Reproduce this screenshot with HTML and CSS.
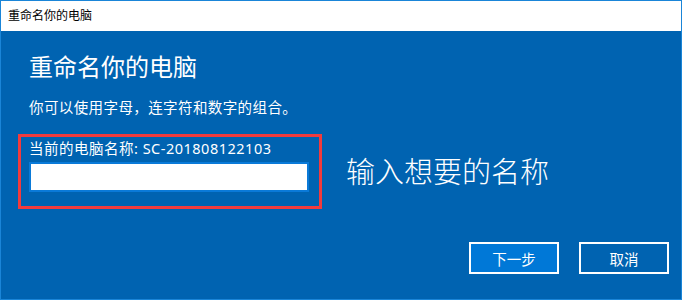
FILE: index.html
```html
<html>
<head>
    <title>重命名你的电脑</title>
    <meta name="viewport" content="width=device-width, initial-scale=1.0">
    <link rel="stylesheet" href="styles.css">
</head>
<body>
<div class="window">
    <div class="titlebar">重命名你的电脑</div>
    <div class="content">
        <h1>重命名你的电脑</h1>
        <p class="subtitle">你可以使用字母，连字符和数字的组合。</p>

        <div class="name-row">
            <div class="highlight">
                <label for="pcname">当前的电脑名称: SC-201808122103</label>
                <input type="text" id="pcname">
            </div>
            <div class="hint">输入想要的名称</div>
        </div>

        <div class="actions">
            <button class="primary">下一步</button>
            <button>取消</button>
        </div>
    </div>
</div>
</body>
</html>
```

FILE: styles.css
```css
body {
    margin: 0;
    font-family: "Noto Sans", "Noto Sans CJK SC", sans-serif;
}

.window {
    width: 682px;
    height: 300px;
    box-sizing: border-box;
    border: 1px solid #1a85d8;
    background: #0063b1;
    display: flex;
    flex-direction: column;
}

.titlebar {
    height: 30px;
    line-height: 30px;
    background: #ffffff;
    color: #000000;
    font-size: 12px;
    padding-left: 7px;
}

.content {
    flex: 1;
    padding: 20px 12px 0 28px;
    color: #ffffff;
}

h1 {
    margin: 0;
    font-size: 24px;
    line-height: 32px;
    font-weight: normal;
}

.subtitle {
    margin: 14px 0 0 0;
    font-size: 14.5px;
    line-height: 20px;
    letter-spacing: 0.4px;
}

.name-row {
    display: flex;
    align-items: center;
    margin: 17px 0 0 -11px;
}

.highlight {
    width: 304px;
    box-sizing: border-box;
    border: 3px solid #f23b3d;
    padding: 1px 10px 14px 8px;
    display: flex;
    flex-direction: column;
    gap: 4px;
}

label {
    font-size: 14.5px;
    line-height: 20px;
    letter-spacing: 0.5px;
}

input {
    width: 280px;
    height: 30px;
    box-sizing: border-box;
    border: 2px solid #0a7ad8;
    background: #ffffff;
    outline: none;
    margin: 0;
}

.hint {
    margin-left: 24px;
    font-size: 29px;
    font-weight: 300;
    line-height: 36px;
}

.actions {
    display: flex;
    justify-content: flex-end;
    gap: 20px;
    margin-top: 33px;
}

button {
    width: 90px;
    height: 32px;
    box-sizing: border-box;
    border: 2px solid #ffffff;
    background: #0063b1;
    color: #ffffff;
    font-family: inherit;
    font-size: 14.5px;
    padding: 0;
}

button.primary {
    background: #0078d7;
}
```
